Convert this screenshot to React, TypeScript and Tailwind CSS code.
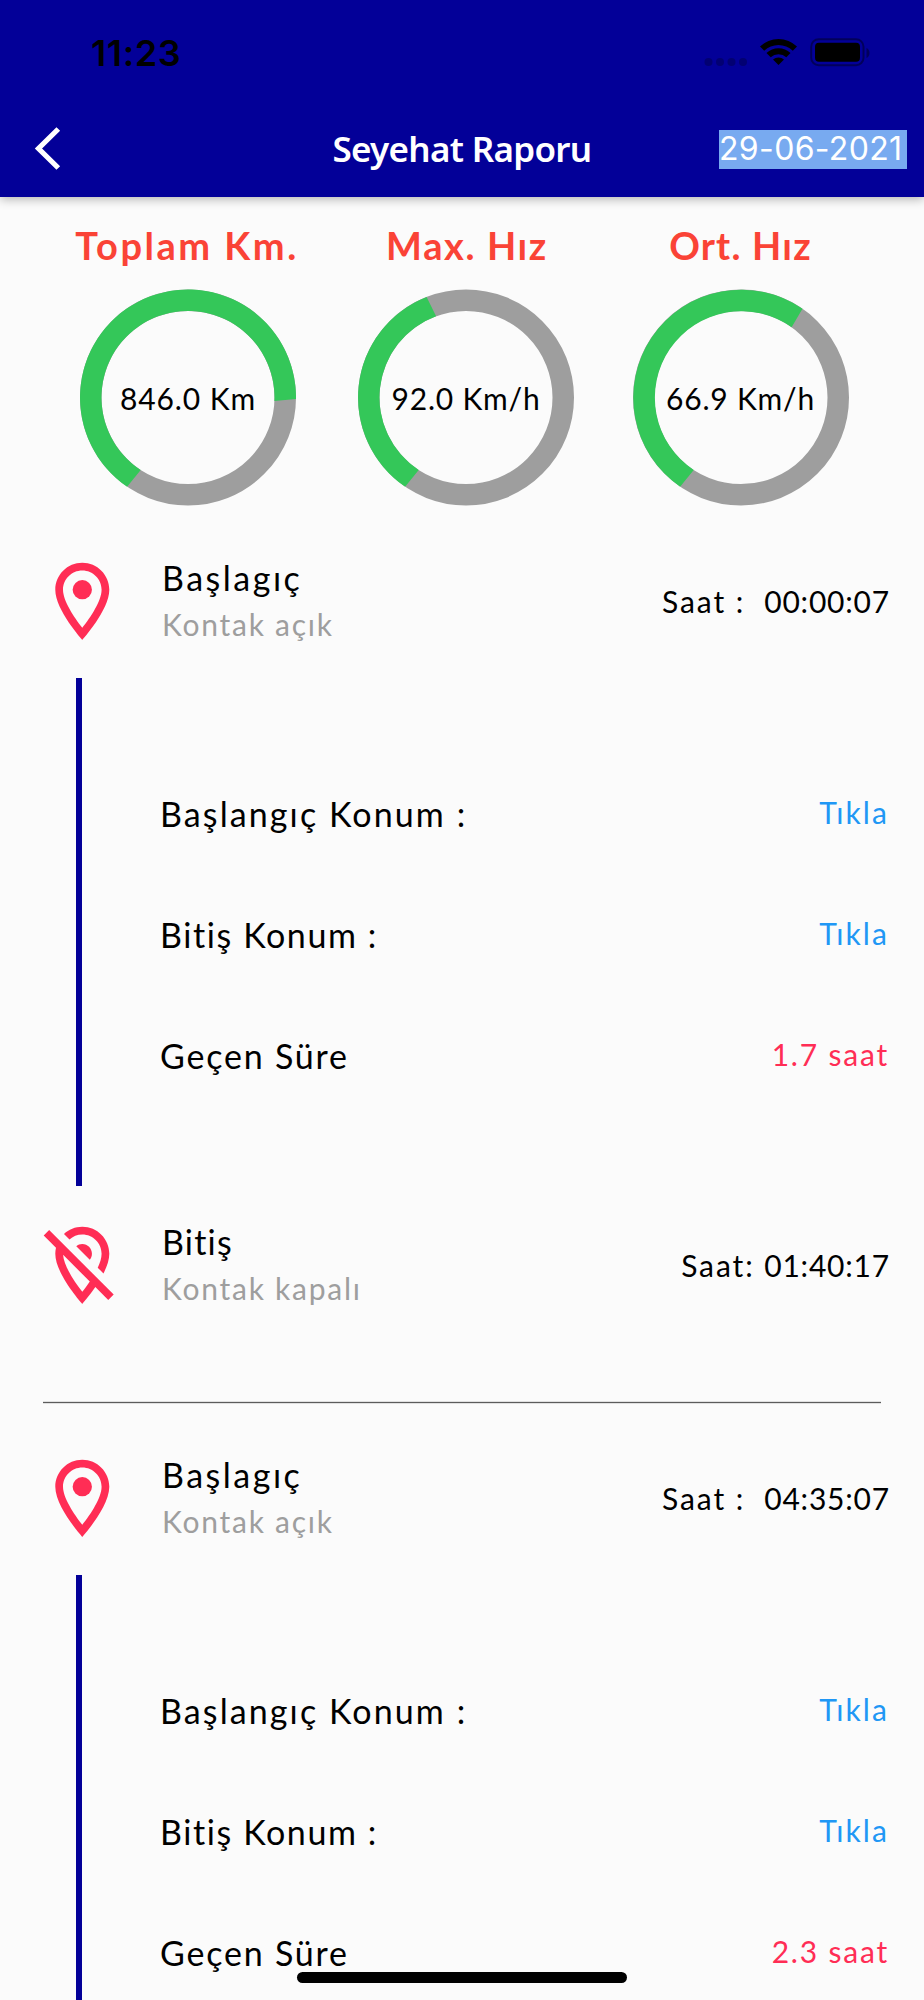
import React from "react";

// outer / inner: end cut of the green arc, relative to the ring center
const gauges = [
  { id: 1, title: "Toplam Km.", value: "846.0 Km", outer: [108, 1.5], inner: [86.4, 3.5], large: 1, titleClass: "tracking-[2.5px] -ml-0.5", valueClass: "tracking-[0.9px]" },
  { id: 2, title: "Max. Hız", value: "92.0 Km/h", outer: [-39.4, -100.5], inner: [-29.9, -81.2], large: 0, titleClass: "tracking-[1.6px] ml-0.5", valueClass: "tracking-[0.8px]" },
  { id: 3, title: "Ort. Hız", value: "66.9 Km/h", outer: [61.5, -88.8], inner: [50.6, -70.2], large: 1, titleClass: "tracking-[1.2px]", valueClass: "tracking-[0.8px]" },
];

type TripData = { id: number; start: string; end?: string; duration: string };

const trips: TripData[] = [
  { id: 1, start: "00:00:07", end: "01:40:17", duration: "1.7 saat" },
  { id: 2, start: "04:35:07", duration: "2.3 saat" },
];

const PinIcon: React.FC = () => (
  <svg viewBox="0 0 24 24" className="w-[92.6px] h-[92.6px]" fill="#ff2d55">
    <path d="M12 2C8.13 2 5 5.13 5 9c0 5.25 7 13 7 13s7-7.75 7-13c0-3.87-3.13-7-7-7zM7 9c0-2.76 2.24-5 5-5s5 2.24 5 5c0 2.88-2.88 7.19-5 9.88C9.92 16.21 7 11.85 7 9z" />
    <circle cx="12" cy="9" r="2.5" />
  </svg>
);

const PinOffIcon: React.FC = () => (
  <svg viewBox="0 0 24 24" className="w-[92.6px] h-[92.6px]" fill="#ff2d55">
    <path d="M12 4c2.76 0 5 2.24 5 5 0 1.06-.39 2.32-1 3.62l1.49 1.49C18.37 12.36 19 10.57 19 9c0-3.87-3.13-7-7-7-1.84 0-3.5.71-4.75 1.86l1.43 1.43C9.55 4.49 10.72 4 12 4zm0 2.5c-.59 0-1.13.21-1.56.56l3.5 3.5c.35-.43.56-.97.56-1.56 0-1.38-1.12-2.5-2.5-2.5zM3.41 2.86L2 4.27l3.18 3.18C5.07 7.95 5 8.47 5 9c0 5.25 7 13 7 13s1.67-1.85 3.38-4.35L18.73 21l1.41-1.41L3.41 2.86zM12 18.88c-2.01-2.58-4.8-6.74-4.98-9.59l6.92 6.92c-.65.98-1.33 1.89-1.94 2.67z" />
  </svg>
);

const Gauge: React.FC<{ gauge: (typeof gauges)[number] }> = ({ gauge }) => {
  const [ox, oy] = gauge.outer;
  const [ix, iy] = gauge.inner;
  return (
    <div className="flex flex-col items-center">
      <p className={`text-[38px] leading-[48px] font-bold text-[#fa4336] whitespace-nowrap ${gauge.titleClass}`}>{gauge.title}</p>
      <div className="grid place-items-center mt-5">
        <svg viewBox="-108 -108.5 216 217" className="col-start-1 row-start-1 w-[216px] h-[217px]">
          <circle r="97.25" fill="none" stroke="#9e9e9e" strokeWidth="21.5" />
          <path
            fill="#34c759"
            d={`M-60.9 89.2A108 108 0 ${gauge.large} 1 ${ox} ${oy}L${ix} ${iy}A86.5 86.5 0 ${gauge.large} 0 -47.3 72.4Z`}
          />
        </svg>
        <span className={`col-start-1 row-start-1 pt-px text-[30px] leading-9 text-black whitespace-nowrap ${gauge.valueClass}`}>{gauge.value}</span>
      </div>
    </div>
  );
};

type StopProps = {
  icon: React.ReactNode;
  title: string;
  titleClass: string;
  status: string;
  label: string;
  time: string;
};

const Stop: React.FC<StopProps> = ({ icon, title, titleClass, status, label, time }) => (
  <div className="flex items-center h-[94px] pl-[35.5px] pr-[34px]">
    <div className="w-[126.5px] shrink-0">{icon}</div>
    <div className="leading-[47px]">
      <p className={`text-[34px] text-black ${titleClass}`}>{title}</p>
      <p className="text-[30px] text-[#9e9e9e] tracking-[1.75px]">{status}</p>
    </div>
    <p className="ml-auto text-[30px] text-black whitespace-pre tracking-[0.8px]">
      <span className="tracking-[1.9px]">{label}</span>
      {time}
    </p>
  </div>
);

const Trip: React.FC<{ trip: TripData }> = ({ trip }) => (
  <section className="pt-3.5">
    <Stop icon={<PinIcon />} title="Başlagıç" titleClass="tracking-[2.5px]" status="Kontak açık" label="Saat :  " time={trip.start} />
    <div className="flex mt-[30px] h-[508px] pl-[76px] pr-[35px]">
      <div className="w-1.5 bg-[#030098]" />
      <div className="flex-1 pt-[75px] pl-[78px] text-[34px] text-black">
        <div className="flex items-center justify-between h-[121px]">
          <span className="tracking-[2.1px]">Başlangıç Konum :</span>
          <a className="text-[30px] text-[#2097f5] tracking-[2.1px] -mt-0.5">Tıkla</a>
        </div>
        <div className="flex items-center justify-between h-[121px]">
          <span className="tracking-[1.6px]">Bitiş Konum :</span>
          <a className="text-[30px] text-[#2097f5] tracking-[2.1px] -mt-0.5">Tıkla</a>
        </div>
        <div className="flex items-center justify-between h-[121px]">
          <span className="tracking-[1.8px]">Geçen Süre</span>
          <span className="text-[30px] text-[#ff2d55] tracking-[1.8px] -mt-0.5">{trip.duration}</span>
        </div>
      </div>
    </div>
    {trip.end && (
      <>
        <div className="mt-8">
          <Stop icon={<PinOffIcon />} title="Bitiş" titleClass="tracking-[1.2px]" status="Kontak kapalı" label="Saat: " time={trip.end} />
        </div>
        <div className="mt-[89px] mb-[33px] ml-[43px] mr-[43px] h-[3px] border-y border-[#e0e0e0] bg-[#5c5c5c]" />
      </>
    )}
  </section>
);

const App: React.FC = () => {
  return (
    <div className="relative w-[924px] h-[2000px] overflow-hidden bg-[#fbfbfb] font-['Lato',sans-serif]">
      {/* Header */}
      <header className="h-[196.5px] bg-[#030098] shadow-[0_2px_10px_rgba(0,0,0,0.3)]">
        <div className="flex items-center justify-between h-[106px] pl-[91px] pr-[54px] font-['Inter',sans-serif]">
          <span className="text-[36px] leading-[44px] font-semibold text-black tracking-[0.6px]">11:23</span>
          <svg viewBox="0 0 170 36" className="w-[170px] h-9">
            <g fill="#000" fillOpacity="0.25">
              <circle cx="8.5" cy="27" r="4" />
              <circle cx="20" cy="27" r="4" />
              <circle cx="31.5" cy="27" r="4" />
              <circle cx="43" cy="27" r="4" />
              <path d="M166.5 13c4 1.6 4 8.4 0 10z" fillOpacity="0.4" />
            </g>
            <path d="M60 11.6a26.5 26.5 0 0 1 37 0l-4.2 4.2a20.5 20.5 0 0 0-28.6 0zM66.5 18.1a17.3 17.3 0 0 1 24 0l-4.2 4.2a11.4 11.4 0 0 0-15.6 0zM73 24.6a8.2 8.2 0 0 1 11 0l-5.5 5.5z" />
            <rect x="111.2" y="4.2" width="52.3" height="26" rx="7.5" fill="none" stroke="#000" strokeOpacity="0.4" strokeWidth="2" />
            <rect x="115" y="7.7" width="45" height="19" rx="4" />
          </svg>
        </div>
        <div className="grid grid-cols-[1fr_auto_1fr] items-center h-[86px] px-[17px]">
          <svg viewBox="0 0 28 44" className="w-7 h-11 ml-[17px]" fill="none" stroke="#fff" strokeWidth="5.2">
            <path d="M24.3 2L4.5 21.5L24.3 41" />
          </svg>
          <h1 className="text-[35px] leading-[48px] font-semibold text-white tracking-[-0.7px] font-['Noto_Sans',sans-serif]">Seyehat Raporu</h1>
          <span className="justify-self-end h-[39px] w-[188px] bg-[#78aaf0] text-[32px] leading-[38px] text-white tracking-[0.35px] whitespace-nowrap font-['Inter',sans-serif]">
            29-06-2021
          </span>
        </div>
      </header>

      {/* Summary */}
      <div className="grid grid-cols-[278px_278px_271px] h-[343.5px] pt-[24.5px] pl-[49px]">
        {gauges.map((gauge) => (
          <Gauge key={gauge.id} gauge={gauge} />
        ))}
      </div>

      {/* Trips */}
      {trips.map((trip) => (
        <Trip key={trip.id} trip={trip} />
      ))}

      {/* Home indicator */}
      <div className="absolute left-[297px] top-[1972px] w-[330px] h-[11px] rounded-full bg-black" />
    </div>
  );
};

export default App;
